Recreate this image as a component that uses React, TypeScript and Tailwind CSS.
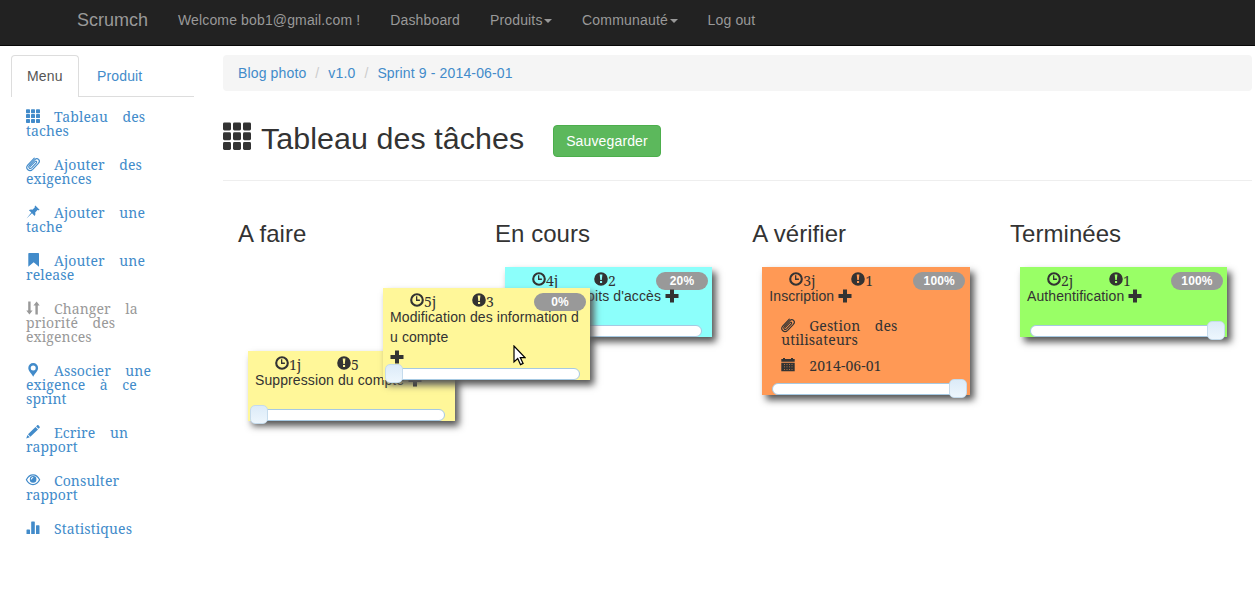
import type { ReactNode } from "react";

type IconName =
  | "th" | "clip" | "pin" | "bookmark" | "sort" | "marker" | "pencil" | "eye"
  | "stats" | "clock" | "alert" | "plus" | "calendar";

const shapes: Record<IconName, ReactNode> = {
  th: (
    <>
      {[0.2, 5.1, 10].map((y) =>
        [0, 5, 10].map((x) => <rect key={`${x}-${y}`} x={x} y={y} width="4" height="4" rx=".7" />),
      )}
    </>
  ),
  clip: (
    <path
      d="M4.300 9.400L9 4.600c1.100-1 2.300.1 1.400 1.200L5.900 10.600c-2 2-4.300-.2-2.500-2.300L8.600 2.900c2.900-2.900 6.400.5 3.800 3.400l-5.700 6C3.400 15.500-1.100 11.700 1.700 8.100L8.300 1.200"
      fill="none" stroke="currentColor" strokeWidth="1.150" strokeLinecap="round"
    />
  ),
  pin: <path d="M9.3.4l4.3 4.3c-.7.5-1.5.6-2.1.4L9.2 7.6c.4 1.4.1 2.6-.6 3.3L6 8.3.6 13.4 5.3 7.6 2.9 5.2c.8-.7 2.1-.9 3.4-.5l2.500-2.300C8.600 1.700 8.700.9 9.300.4z" />,
  bookmark: <path d="M2.3.8c0-.4.3-.7.7-.7h9.300c.400 0 .7.3.7.7v12.900L7.650 9.200 2.3 13.700z" />,
  sort: <path d="M2.200.6h2.400v8.900h2L3.400 13.500.300 9.500h1.900zM9.400 13.400V4.500h-2L10.600.5l3.100 4h-1.900v8.900z" />,
  marker: <path fillRule="evenodd" d="M7.200.1a4.900 4.900 0 0 0-4.900 4.900c0 3 2.700 4.600 4.900 8.700 2.200-4.100 4.900-5.700 4.900-8.700A4.900 4.900 0 0 0 7.200.1zm0 2.500a2.500 2.500 0 1 1 0 5 2.500 2.500 0 0 1 0-5z" />,
  pencil: <path d="M11.200.3c.5-.4.9-.3 1.400.2l.9.9c.5.5.5 1 .1 1.400l-1 1L10.100 1.400zM9.500 2l2.500 2.400-7.600 7.300L2 9.300zM1.500 9.900l2.300 2.300L.200 13.400z" />,
  eye: (
    <>
      <path d="M.4 6.800C1.900 3.700 4.400 1.900 7 1.900s5.100 1.800 6.600 4.900C12.100 9.900 9.600 11.600 7 11.600S1.900 9.900.4 6.800z" fill="none" stroke="currentColor" strokeWidth="1.200" />
      <circle cx="7.100" cy="6.400" r="3.300" />
      <path d="M4.800 6.400c.2-1.500 1-2.300 2.300-2.500l.2 1c-.9.200-1.400.7-1.600 1.600z" fill="#fff" />
    </>
  ),
  stats: <path d="M.5 9.200c0-.4.200-.6.600-.6h2.300c.4 0 .6.200.6.600v3.900H.5zM5.200 1c0-.4.200-.6.600-.6h2.400c.4 0 .6.200.6.600v12.100H5.200zM10 4.900c0-.4.200-.6.600-.6h2.300c.4 0 .6.200.6.600v8.200H10z" />,
  clock: (
    <>
      <circle cx="7" cy="7" r="5.800" fill="none" stroke="currentColor" strokeWidth="2.100" />
      <path d="M6 3.200h1.300v3.400h2.600v1.300H6z" />
    </>
  ),
  alert: <path fillRule="evenodd" d="M7 .2a6.800 6.800 0 1 1 0 13.600A6.800 6.800 0 0 1 7 .2zM5.700 2.500L6.300 8h1.500l.6-5.500zM6 9v2h2.100V9z" />,
  plus: <path d="M5 .5h4v4.500h4.500v4H9v4.500H5V9H.5V5H5z" />,
  calendar: <path fillRule="evenodd" d="M2 0h2v1h6V0h2v1h1.700v2.800H.3V1H2zM.3 4.700h13.400v8.600H.3zM3.100 6v.7h.8V6zm2.500 0v.7h.8V6zm2.500 0v.7h.8V6zm2.500 0v.7h.8V6zM3.100 8.500v.7h.8v-.7zm2.500 0v.7h.8v-.7zm2.500 0v.7h.8v-.7zm2.500 0v.7h.8v-.7zM3.100 11v.7h.8V11zm2.500 0v.7h.8V11zm2.500 0v.7h.8V11zm2.500 0v.7h.8V11z" />,
};

function Icon({ name, className = "size-3.5" }: { name: IconName; className?: string }) {
  return (
    <svg viewBox="0 0 14 14" fill="currentColor" className={`shrink-0 overflow-visible ${className}`} aria-hidden="true">
      {shapes[name]}
    </svg>
  );
}

const serif = "font-['Noto_Serif','Droid_Serif','DejaVu_Serif',serif] text-[14px] leading-[14px] tracking-[0.1px]";

function IconText({ icon, lines }: { icon: IconName; lines: string[] }) {
  return (
    <div className={`${serif} [word-spacing:10.8px] whitespace-nowrap`}>
      <div className="flex h-3.5 gap-3.5">
        <Icon name={icon} className="size-3.5 -mt-px" />
        <span>{lines[0]}</span>
      </div>
      {lines.slice(1).map((line) => (
        <div key={line}>{line}</div>
      ))}
    </div>
  );
}

const menu: { icon: IconName; lines: string[]; disabled?: boolean }[] = [
  { icon: "th", lines: ["Tableau des", "taches"] },
  { icon: "clip", lines: ["Ajouter des", "exigences"] },
  { icon: "pin", lines: ["Ajouter une", "tache"] },
  { icon: "bookmark", lines: ["Ajouter une", "release"] },
  { icon: "sort", lines: ["Changer la", "priorité des", "exigences"], disabled: true },
  { icon: "marker", lines: ["Associer une", "exigence à ce", "sprint"] },
  { icon: "pencil", lines: ["Ecrire un", "rapport"] },
  { icon: "eye", lines: ["Consulter", "rapport"] },
  { icon: "stats", lines: ["Statistiques"] },
];

function Slider({ end }: { end?: boolean }) {
  return (
    <div className={`mt-auto ml-2.5 flex h-3 w-[187px] shrink-0 items-center rounded-[6px] border border-[#a6c9e2] bg-white ${end ? "justify-end" : ""}`}>
      <div className={`mb-0.5 h-[19px] w-[18px] shrink-0 rounded-[5px] border border-[#c5dbec] bg-linear-to-b from-[#dcebf8] to-[#edf6fd] ${end ? "-mr-[9px]" : "-ml-[9px]"}`} />
    </div>
  );
}

interface CardProps {
  days: string;
  priority: string;
  progress?: string;
  color: string;
  title: ReactNode;
  end?: boolean;
  children?: ReactNode;
}

function Card({ days, priority, progress, color, title, end, children }: CardProps) {
  return (
    <div className={`flex w-[207.25px] flex-col shadow-[4px_5px_7px_#555] ${color}`}>
      <div className="flex h-[19px] shrink-0 pt-[5px] pl-[27px]">
        <div className="flex w-[62px]">
          <Icon name="clock" />
          <span className={`${serif} mt-0.5 h-0`}>{days}</span>
        </div>
        <div className="flex w-[62px]">
          <Icon name="alert" />
          <span className={`${serif} mt-0.5 h-0`}>{priority}</span>
        </div>
        {progress && (
          <span className="h-[18px] w-[52px] rounded-full bg-[#999] text-center text-xs leading-[18px] font-bold text-white">
            {progress}
          </span>
        )}
      </div>
      <div className="pl-[7px] text-sm leading-5 tracking-[0.1px] whitespace-nowrap">{title}</div>
      {children}
      <Slider end={end} />
    </div>
  );
}

function Titled({ text }: { text: string }) {
  return (
    <span className="flex items-center gap-1">
      {text}
      <Icon name="plus" />
    </span>
  );
}

function Caret() {
  return <span className="mt-0.5 ml-[1.5px] border-x-4 border-t-[4.5px] border-x-transparent border-t-current" />;
}

export default function App() {
  return (
    <div className="h-[595px] w-[1255px] overflow-hidden bg-white font-['Liberation_Sans',Arial,sans-serif] text-sm leading-5 tracking-[0.14px] text-[#333]">
      <nav className="flex h-[46px] gap-[30px] border-b border-[#080808] bg-[#222] pt-2.5 pl-[77px] whitespace-nowrap text-[#999]">
        <a className="text-lg leading-5 tracking-normal">Scrumch</a>
        <a>Welcome bob1@gmail.com !</a>
        <a>Dashboard</a>
        <a className="flex h-5 items-center">Produits<Caret /></a>
        <a className="flex h-5 items-center tracking-[0.2px]">Communauté<Caret /></a>
        <a>Log out</a>
      </nav>

      <div className="flex">
        <aside className="ml-[11px] w-[183px] shrink-0 pt-[9px]">
          <div className="flex h-[42px] gap-0.5 border-b border-[#ddd]">
            <a className="h-[42px] w-[68px] rounded-t border border-b-0 border-[#ddd] bg-white px-[15px] py-2.5 text-[#555]">Menu</a>
            <a className="px-4 py-[11px] text-[#428bca]">Produit</a>
          </div>
          <div className="flex flex-col gap-5 pt-[13px] pl-[15px]">
            {menu.map((item, i) => (
              <a key={i} className={item.disabled ? "text-[#999]" : "text-[#428bca]"}>
                <IconText icon={item.icon} lines={item.lines} />
              </a>
            ))}
          </div>
        </aside>

        <main className="ml-[29px] w-[1029px] pt-[9px]">
          <div className="flex h-9 rounded bg-[#f5f5f5] px-[15px] py-2 text-[#428bca]">
            <a>Blog photo</a>
            <span className="w-[22px] text-center text-[#ccc]">/</span>
            <a>v1.0</a>
            <span className="w-[22px] text-center text-[#ccc]">/</span>
            <a>Sprint 9 - 2014-06-01</a>
          </div>

          <div className="flex h-[90px] border-b border-[#eee]">
            <Icon name="th" className="mt-[31px] size-[28px]" />
            <h1 className="mt-[31px] ml-2.5 w-[292px] text-[30.4px] leading-[33px] tracking-[0.08px] whitespace-nowrap">Tableau des tâches</h1>
            <button className="mt-[34px] h-8 w-[108px] rounded border border-[#4cae4c] bg-[#5cb85c] text-white">Sauvegarder</button>
          </div>

          <div className="relative flex pt-10 pl-[15px]">
            <section className="w-[257px]">
              <h2 className="text-2xl leading-[26px] tracking-[0.05px]">A faire</h2>
              <div className="mt-[104px] ml-2.5 flex h-[70px]">
                <Card days="1j" priority="5" color="bg-[#fff799]" title={<Titled text="Suppression du compte" />} />
              </div>
            </section>
            <section className="w-[257.25px]">
              <h2 className="text-2xl leading-[26px] tracking-[0.05px]">En cours</h2>
              <div className="mt-5 ml-2.5 flex h-[70px]">
                <Card days="4j" priority="2" progress="20%" color="bg-[#8cfffb]" title={<Titled text="Gérer les droits d'accès" />} />
              </div>
            </section>
            <section className="w-[257.75px]">
              <h2 className="text-2xl leading-[26px] tracking-[0.05px]">A vérifier</h2>
              <div className="mt-5 ml-2.5 flex h-32">
                <Card days="3j" priority="1" progress="100%" color="bg-[#ff9955]" title={<Titled text="Inscription" />} end>
                  <div className="flex flex-col gap-3 pt-[13px] pl-[19px]">
                    <IconText icon="clip" lines={["Gestion des", "utilisateurs"]} />
                    <IconText icon="calendar" lines={["2014-06-01"]} />
                  </div>
                </Card>
              </div>
            </section>
            <section>
              <h2 className="text-2xl leading-[26px] tracking-[0.05px]">Terminées</h2>
              <div className="mt-5 ml-2.5 flex h-[70px]">
                <Card days="2j" priority="1" progress="100%" color="bg-[#99ff66]" title={<Titled text="Authentification" />} end />
              </div>
            </section>

            <div className="absolute top-[107px] left-40 flex h-[92px]">
              <Card
                days="5j"
                priority="3"
                progress="0%"
                color="bg-[#fff799]"
                title={
                  <>
                    Modification des information d<br />u compte<br />
                    <Icon name="plus" className="mt-[3px] size-3.5" />
                  </>
                }
              />
              <svg className="absolute top-[57px] left-[130px]" width="13" height="21" viewBox="0 0 13 21">
                <path d="M1 1v16l3.700-3.400 2.800 6 2.600-1.200-2.800-5.800H12z" fill="#fff" stroke="#000" strokeWidth="1.200" />
              </svg>
            </div>
          </div>
        </main>
      </div>
    </div>
  );
}
